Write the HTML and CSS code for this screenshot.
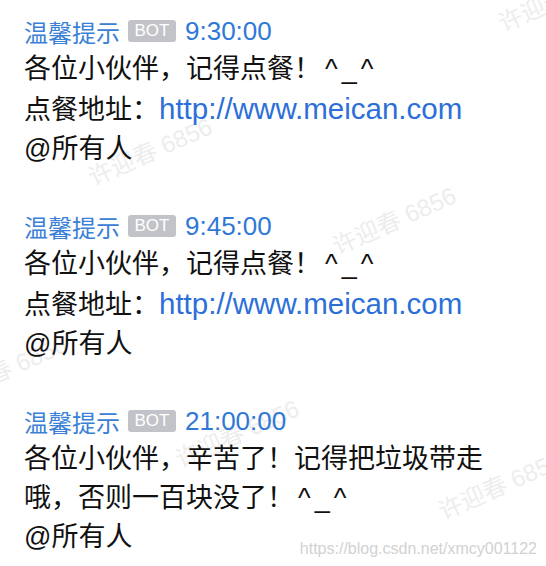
FILE: index.html
```html
<!DOCTYPE html>
<html lang="zh-CN">
<head>
    <meta charset="UTF-8">
    <meta name="viewport" content="width=device-width, initial-scale=1.0">
    <title>温馨提示</title>
    <link rel="stylesheet" href="styles.css">
</head>
<body>

<div class="watermarks">
    <span class="wm wm-1">许迎春 6856</span>
    <span class="wm wm-2">许迎春 6856</span>
    <span class="wm wm-3">许迎春 6856</span>
    <span class="wm wm-4">许迎春 6856</span>
    <span class="wm wm-5">许迎春 6856</span>
    <span class="wm wm-6">许迎春 6856</span>
</div>

<div class="feed">
    <div class="msg">
        <div class="msg-head">
            <span class="sender">温馨提示</span>
            <span class="bot">BOT</span>
            <span class="time">9:30:00</span>
        </div>
        <div class="msg-body">
            <p>各位小伙伴，记得点餐！<span class="face">^_^</span></p>
            <p>点餐地址：<a class="link" href="#">http://www.meican.com</a></p>
            <p>@所有人</p>
        </div>
    </div>

    <div class="msg">
        <div class="msg-head">
            <span class="sender">温馨提示</span>
            <span class="bot">BOT</span>
            <span class="time">9:45:00</span>
        </div>
        <div class="msg-body">
            <p>各位小伙伴，记得点餐！<span class="face">^_^</span></p>
            <p>点餐地址：<a class="link" href="#">http://www.meican.com</a></p>
            <p>@所有人</p>
        </div>
    </div>

    <div class="msg">
        <div class="msg-head">
            <span class="sender">温馨提示</span>
            <span class="bot">BOT</span>
            <span class="time">21:00:00</span>
        </div>
        <div class="msg-body">
            <p>各位小伙伴，辛苦了！记得把垃圾带走哦，否则一百块没了！<span class="face">^_^</span></p>
            <p>@所有人</p>
        </div>
    </div>
</div>

<div class="source">https://blog.csdn.net/xmcy001122</div>

</body>
</html>
```

FILE: styles.css
```css
html, body {
    height: 100%;
}
body {
    margin: 0;
    background-color: #fff;
    font-family: "Liberation Sans", "Noto Sans CJK SC", sans-serif;
    color: #111;
    overflow: hidden;
    position: relative;
}
.feed {
    position: relative;
    z-index: 1;
    padding-left: 24px;
}
.msg {
    padding: 16px 0 26px;
}
.msg-head {
    display: flex;
    align-items: center;
    height: 30px;
    margin-bottom: 4px;
}
.sender {
    font-size: 24px;
    color: #3a80d6;
    font-family: "Noto Sans CJK SC", sans-serif;
}
.bot {
    margin-left: 8px;
    width: 48px;
    height: 22px;
    line-height: 22px;
    border-radius: 3px;
    background-color: #c2c3c8;
    color: #fff;
    font-size: 17px;
    text-align: center;
}
.time {
    margin-left: 9px;
    font-size: 26px;
    color: #2f78d6;
}
.msg-body {
    width: 475px;
}
.msg-body p {
    margin: 0;
    font-size: 27px;
    line-height: 39px;
}
.face {
    margin-left: 4px;
    letter-spacing: 4px;
}
.link {
    color: #2c6fd8;
    text-decoration: none;
    font-size: 29.5px;
}
.watermarks {
    position: absolute;
    top: 0;
    left: 0;
    width: 100%;
    height: 100%;
    z-index: 0;
    pointer-events: none;
}
.wm {
    position: absolute;
    font-size: 24px;
    line-height: 24px;
    white-space: nowrap;
    color: #ededed;
    transform: rotate(-24deg);
    transform-origin: 0 100%;
}
.wm-1 { left: 95px; top: 166px; }
.wm-2 { left: 339px; top: 235px; }
.wm-3 { left: -50px; top: 384px; }
.wm-4 { left: 182px; top: 448px; }
.wm-5 { left: 445px; top: 500px; }
.wm-6 { left: 505px; top: 12px; }
.source {
    position: absolute;
    right: 9px;
    bottom: 8px;
    font-size: 16px;
    color: #d2d2d2;
    z-index: 2;
}
```
